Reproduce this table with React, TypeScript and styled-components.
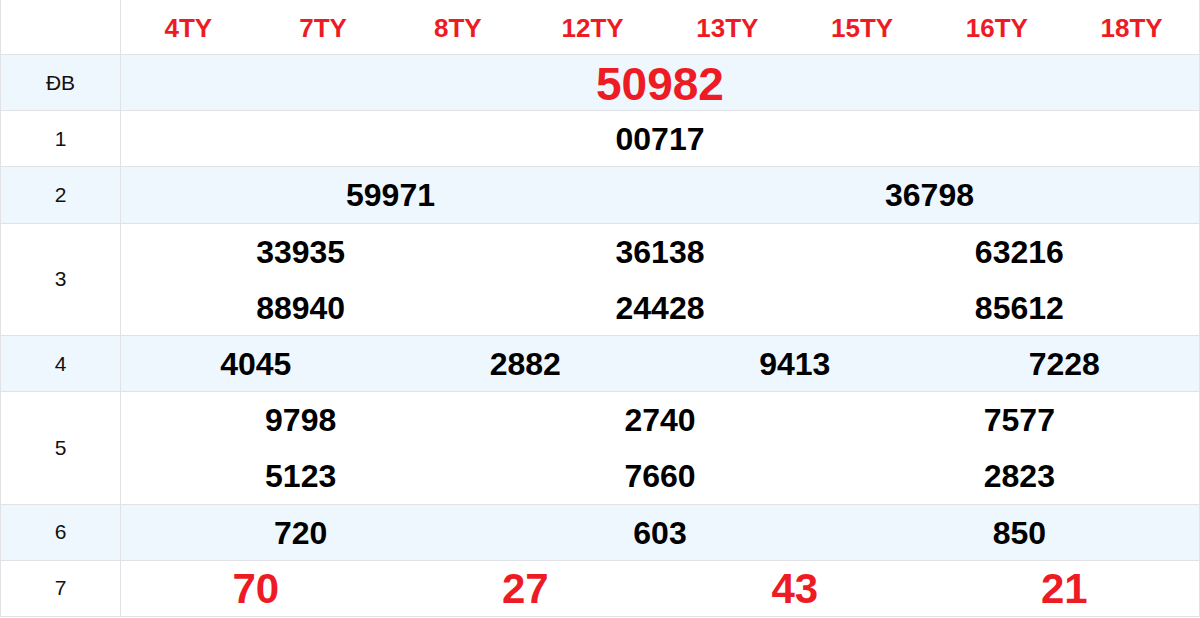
import styled, { createGlobalStyle } from "styled-components";

const GlobalStyle = createGlobalStyle`
  * { box-sizing: border-box; }
  body {
    margin: 0;
    background: #fff;
    font-family: "Liberation Sans", Arial, sans-serif;
  }
`;

const Table = styled.div`
  width: 1200px;
  border-left: 1px solid #e0e2e6;
  border-right: 1px solid #e0e2e6;
  color: #000;
`;

// one prize line is a touch over 56px in the reference
const LINE = 56.2;

const Row = styled.div<{ $alt?: boolean; $lines: number; $head?: boolean }>`
  display: grid;
  grid-template-columns: 120px 1fr;
  height: ${(p) => (p.$head ? 55 : p.$lines * LINE)}px;
  border-bottom: 1px solid #e0e2e6;
  background: ${(p) => (p.$alt ? "#eef6fe" : "#fff")};
`;

const Label = styled.div`
  display: flex;
  align-items: center;
  justify-content: center;
  border-right: 1px solid #e0e2e6;
  font-size: 21px;
  color: #111;
`;

const Values = styled.div<{ $cols: number }>`
  display: grid;
  grid-template-columns: repeat(${(p) => p.$cols}, 1fr);
  grid-auto-rows: 1fr;
`;

const Value = styled.div<{ $size: number; $red?: boolean }>`
  display: flex;
  align-items: center;
  justify-content: center;
  padding-top: 2px;
  font-weight: 700;
  font-size: ${(p) => p.$size}px;
  color: ${(p) => (p.$red ? "#ed1c24" : "#000")};
`;

const provinces = ["4TY", "7TY", "8TY", "12TY", "13TY", "15TY", "16TY", "18TY"];

type Prize = {
  label: string;
  cols: number;
  nums: string[];
  size?: number;
  red?: boolean;
};

const prizes: Prize[] = [
  { label: "ĐB", cols: 1, nums: ["50982"], size: 46, red: true },
  { label: "1", cols: 1, nums: ["00717"] },
  { label: "2", cols: 2, nums: ["59971", "36798"] },
  { label: "3", cols: 3, nums: ["33935", "36138", "63216", "88940", "24428", "85612"] },
  { label: "4", cols: 4, nums: ["4045", "2882", "9413", "7228"] },
  { label: "5", cols: 3, nums: ["9798", "2740", "7577", "5123", "7660", "2823"] },
  { label: "6", cols: 3, nums: ["720", "603", "850"] },
  { label: "7", cols: 4, nums: ["70", "27", "43", "21"], size: 42, red: true },
];

export default function App() {
  return (
    <>
      <GlobalStyle />
      <Table>
        <Row $lines={1} $head>
          <Label />
          <Values $cols={8}>
            {provinces.map((p) => (
              <Value key={p} $size={26} $red>
                {p}
              </Value>
            ))}
          </Values>
        </Row>
        {prizes.map((pr, i) => (
          <Row key={pr.label} $alt={i % 2 === 0} $lines={Math.ceil(pr.nums.length / pr.cols)}>
            <Label>{pr.label}</Label>
            <Values $cols={pr.cols}>
              {pr.nums.map((n, j) => (
                <Value key={j} $size={pr.size ?? 32} $red={pr.red}>
                  {n}
                </Value>
              ))}
            </Values>
          </Row>
        ))}
      </Table>
    </>
  );
}
